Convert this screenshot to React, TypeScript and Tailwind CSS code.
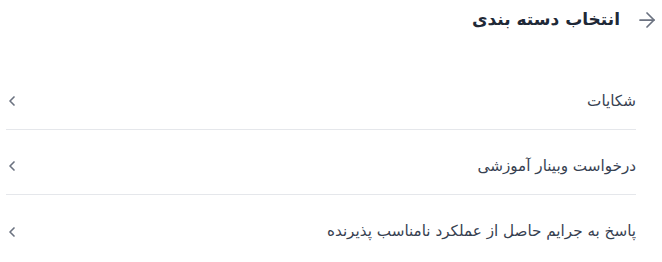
import React from 'react';
import { ArrowRight, ChevronLeft } from 'lucide-react';

const items = [
  'شکایات',
  'درخواست وبینار آموزشی',
  'پاسخ به جرایم حاصل از عملکرد نامناسب پذیرنده',
];

const App = () => {
  return (
    <div
      dir="rtl"
      className="w-[662px] h-[262px] bg-white text-[#1f2937]"
      style={{ fontFamily: '"DejaVu Sans", "Noto Sans", sans-serif' }}
    >
      <div className="flex items-center gap-[15px] pr-[3px] pt-[8px] h-[24px] box-content">
        <ArrowRight className="w-[24px] h-[24px] text-[#6b7280]" strokeWidth={1.75} />
        <h1 className="text-[17px] font-semibold">انتخاب دسته بندی</h1>
      </div>
      <ul className="mt-[33px] mr-[26px] ml-[6px]">
        {items.map((item, i) => (
          <li
            key={item}
            className={`flex items-center justify-between h-[65px] pt-[8px] ${
              i < items.length - 1 ? 'border-b border-[#e5e7eb]' : ''
            }`}
          >
            <span className="text-[15.2px] text-[#374151]">{item}</span>
            <ChevronLeft className="w-[16px] h-[16px] text-[#6b7280] -ml-[2px]" strokeWidth={2.5} />
          </li>
        ))}
      </ul>
    </div>
  );
};

export default App;
